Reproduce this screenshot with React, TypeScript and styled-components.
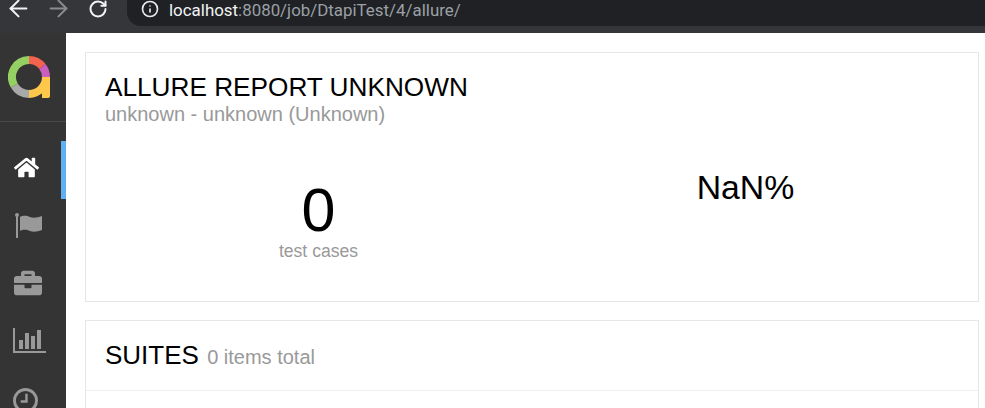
import { createGlobalStyle, styled } from 'styled-components';
import { ArrowLeft, ArrowRight, RotateCw, Info } from 'lucide-react';
import { FaHome, FaBriefcase } from 'react-icons/fa';

const GlobalStyle = createGlobalStyle`
  html, body {
    margin: 0;
    padding: 0;
    background: #fff;
  }
  body {
    font-family: "Liberation Sans", Arial, sans-serif;
    overflow: hidden;
  }
`;

const Page = styled.div`
  width: 985px;
  height: 408px;
  display: flex;
  flex-direction: column;
  overflow: hidden;
`;

const BrowserBar = styled.div`
  height: 33px;
  flex: none;
  background: #35363a;
  display: flex;
  align-items: flex-start;
`;

const NavGroup = styled.div`
  display: flex;
  gap: 4px;
  margin-right: 11px;
`;

const NavButton = styled.span<{ $dim?: boolean }>`
  width: 36px;
  height: 17px;
  display: flex;
  align-items: center;
  justify-content: center;
  color: ${({ $dim }) => ($dim ? '#8a8b8d' : '#f1f3f4')};
`;

const AddressPill = styled.div`
  flex: 1;
  height: 26px;
  background: #202124;
  border-bottom-left-radius: 14px;
  display: flex;
  align-items: flex-start;
  padding-left: 14px;
  font-family: Roboto, "Liberation Sans", sans-serif;
  font-size: 16.9px;
  line-height: 20px;
`;

const Host = styled.span`
  display: inline-block;
  margin-left: 10px;
  color: #f1f3f4;
`;

const UrlPath = styled.span`
  display: inline-block;
  color: #9aa0a6;
`;

const InfoWrap = styled.span`
  display: flex;
  color: #e8eaed;
`;

const Body = styled.div`
  flex: 1;
  display: flex;
  min-height: 0;
`;

const Sidebar = styled.nav`
  width: 66px;
  flex: none;
  background: #343434;
  overflow: hidden;
`;

const LogoBox = styled.div`
  height: 89px;
  box-sizing: border-box;
  border-bottom: 1px solid #4a4a4a;
  padding: 23px 0 0 8px;
`;

const Menu = styled.div`
  padding-top: 19px;
`;

const MenuItem = styled.div<{ $active?: boolean; $inset?: number }>`
  height: 57.5px;
  width: 66px;
  box-sizing: border-box;
  display: flex;
  align-items: center;
  justify-content: center;
  padding: 0 ${({ $inset }) => $inset ?? 6}px 4px 0;
  color: ${({ $active }) => ($active ? '#fff' : '#999')};
  border-right: 5px solid ${({ $active }) => ($active ? '#5fb0f3' : 'transparent')};
`;

const Content = styled.main`
  flex: 1;
  padding: 19px 6px 0 19px;
  display: flex;
  flex-direction: column;
  gap: 18px;
  min-width: 0;
`;

const Card = styled.section`
  border: 1px solid #e6e6e6;
  background: #fff;
  flex: none;
`;

const SummaryBody = styled.div`
  height: 248px;
  box-sizing: border-box;
  padding: 19px 19px 0;
`;

const Title = styled.h2`
  margin: 0;
  font-weight: 400;
  font-size: 26.2px;
  line-height: 30px;
  color: #000;
`;

const Subtitle = styled.div`
  font-size: 20px;
  line-height: 24px;
  color: #999;
`;

const Stats = styled.div`
  display: grid;
  grid-template-columns: 1fr 1fr;
  text-align: center;
  margin-top: 23px;
`;

const TestCount = styled.div`
  padding-top: 26px;
`;

const BigNumber = styled.div`
  font-size: 61px;
  line-height: 70px;
  color: #000;
`;

const CountLabel = styled.div`
  font-size: 17.6px;
  line-height: 20px;
  margin-top: -4px;
  color: #999;
`;

const Percent = styled.div`
  font-size: 33.8px;
  line-height: 40px;
  padding-top: 18px;
  color: #000;
`;

const SuitesHeader = styled.div`
  height: 70px;
  box-sizing: border-box;
  padding: 19px 19px 0;
  border-bottom: 1px solid #eee;
  font-size: 26px;
  line-height: 30px;
  color: #000;
`;

const SuitesCount = styled.span`
  font-size: 20px;
  margin-left: 1px;
  color: #999;
`;

const SuitesBody = styled.div`
  height: 40px;
`;

const ClockSvg = styled.svg`
  margin-top: 5px;
`;

const arc = (r: number, from: number, to: number) => {
  const p = (a: number) => {
    const t = ((a - 90) * Math.PI) / 180;
    return `${(21 + r * Math.cos(t)).toFixed(2)} ${(21 + r * Math.sin(t)).toFixed(2)}`;
  };
  return `M${p(from)}A${r} ${r} 0 ${to - from > 180 ? 1 : 0} 1 ${p(to)}`;
};

const Logo = () => (
  <svg width="42" height="42" viewBox="0 0 42 42" fill="none" strokeWidth="8">
    <path d={arc(17, 0, 52)} stroke="#f4634d" />
    <path d={arc(17, 52, 90)} stroke="#c95fbd" />
    <path d={arc(17, 90, 180)} stroke="#ffc84a" />
    <path d="M34 21h8v19a2 2 0 0 1-2 2h-6z" fill="#ffc84a" stroke="none" />
    <path d={arc(17, 180, 240)} stroke="#a9a9a9" />
    <path d={arc(17, 240, 360)} stroke="#94d162" />
  </svg>
);

const FlagIcon = () => (
  <svg width="28" height="25" viewBox="0 0 28 25" fill="currentColor">
    <rect x="1" y="2" width="2" height="23" />
    <circle cx="2" cy="2" r="2" />
    <path d="M5 4c4-2 7-1 10 0s7 1 12-1v14c-5 2-9 2-12 1s-6-2-10 0z" />
  </svg>
);

const ChartIcon = () => (
  <svg width="33" height="25" viewBox="0 0 33 25" fill="currentColor">
    <path d="M0 0h2v23h31v2H0z" />
    <rect x="6" y="12" width="4" height="9" />
    <rect x="12" y="5" width="4" height="16" />
    <rect x="18" y="8" width="4" height="13" />
    <rect x="24" y="2" width="4" height="19" />
  </svg>
);

const ClockIcon = () => (
  <ClockSvg width="25" height="25" viewBox="0 0 26 26" fill="none" stroke="currentColor" strokeWidth="3">
    <circle cx="13" cy="13" r="11.5" />
    <path d="M14 6v8H8" strokeWidth="2.5" />
  </ClockSvg>
);

const App = () => (
  <Page>
    <GlobalStyle />
    <BrowserBar>
      <NavGroup>
        <NavButton>
          <ArrowLeft size={27} strokeWidth={1.8} />
        </NavButton>
        <NavButton $dim>
          <ArrowRight size={27} strokeWidth={1.8} />
        </NavButton>
        <NavButton>
          <RotateCw size={20} strokeWidth={2.4} />
        </NavButton>
      </NavGroup>
      <AddressPill>
        <InfoWrap>
          <Info size={18} strokeWidth={2.2} />
        </InfoWrap>
        <Host>localhost</Host>
        <UrlPath>:8080/job/DtapiTest/4/allure/</UrlPath>
      </AddressPill>
    </BrowserBar>
    <Body>
      <Sidebar>
        <LogoBox>
          <Logo />
        </LogoBox>
        <Menu>
          <MenuItem $active $inset={8}>
            <FaHome size={25} />
          </MenuItem>
          <MenuItem $inset={4}>
            <FlagIcon />
          </MenuItem>
          <MenuItem>
            <FaBriefcase size={28} />
          </MenuItem>
          <MenuItem $inset={2}>
            <ChartIcon />
          </MenuItem>
          <MenuItem $inset={10}>
            <ClockIcon />
          </MenuItem>
        </Menu>
      </Sidebar>
      <Content>
        <Card>
          <SummaryBody>
            <Title>ALLURE REPORT UNKNOWN</Title>
            <Subtitle>unknown - unknown (Unknown)</Subtitle>
            <Stats>
              <TestCount>
                <BigNumber>0</BigNumber>
                <CountLabel>test cases</CountLabel>
              </TestCount>
              <Percent>NaN%</Percent>
            </Stats>
          </SummaryBody>
        </Card>
        <Card>
          <SuitesHeader>
            SUITES <SuitesCount>0 items total</SuitesCount>
          </SuitesHeader>
          <SuitesBody />
        </Card>
      </Content>
    </Body>
  </Page>
);

export default App;
